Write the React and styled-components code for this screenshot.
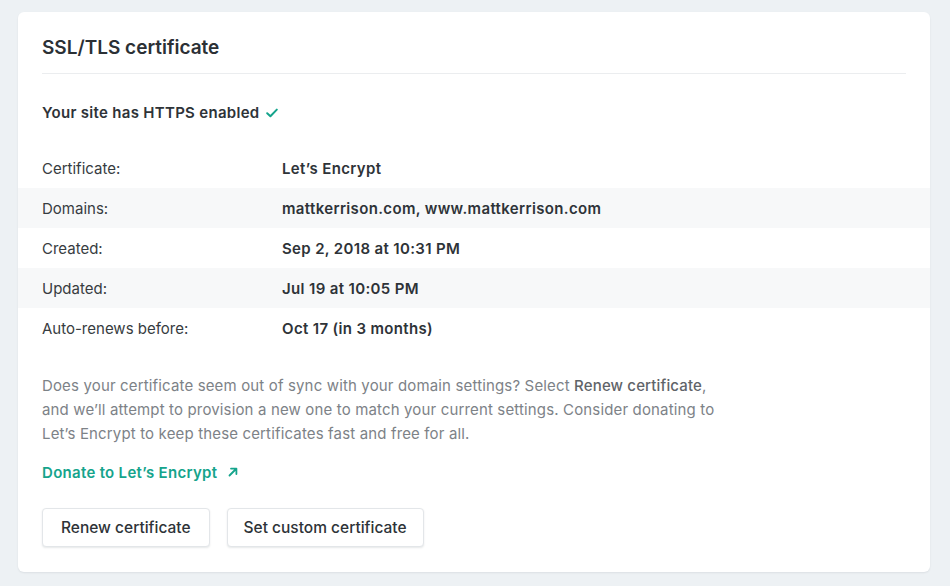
import styled, { createGlobalStyle } from "styled-components";

const GlobalStyle = createGlobalStyle`
  body {
    margin: 0;
    background: #edf1f4;
    font-family: Inter, "Noto Sans", "Liberation Sans", sans-serif;
    -webkit-font-smoothing: antialiased;
  }
`;

const rows = [
  ["Certificate:", "Let’s Encrypt"],
  ["Domains:", "mattkerrison.com, www.mattkerrison.com"],
  ["Created:", "Sep 2, 2018 at 10:31 PM"],
  ["Updated:", "Jul 19 at 10:05 PM"],
  ["Auto-renews before:", "Oct 17 (in 3 months)"],
];

const App = () => {
  return (
    <Page>
      <GlobalStyle />
      <Card>
        <CardHeader>
          <Title>SSL/TLS certificate</Title>
        </CardHeader>
        <Status>
          Your site has HTTPS enabled
          <svg width="12" height="10" viewBox="0 0 12 10">
            <path d="M1.2 5.2 L4.4 8.2 L10.8 1.6" fill="none" stroke="#15a48c" strokeWidth="2" strokeLinecap="round" strokeLinejoin="round" />
          </svg>
        </Status>
        <Table>
          {rows.map(([label, value], i) => (
            <Row key={label} $striped={i % 2 === 1}>
              <Label>{label}</Label>
              <Value>{value}</Value>
            </Row>
          ))}
        </Table>
        <Body>
          <Text>
            Does your certificate seem out of sync with your domain settings? Select <Strong>Renew certificate</Strong>,
            and we’ll attempt to provision a new one to match your current settings. Consider donating to
            Let’s Encrypt to keep these certificates fast and free for all.
          </Text>
          <Link href="#">
            Donate to Let’s Encrypt
            <svg width="10" height="10" viewBox="0 0 10 10">
              <path d="M1.5 8.5 L8 2 M3 1.6 H8.4 V7" fill="none" stroke="#15a48c" strokeWidth="1.8" strokeLinecap="round" strokeLinejoin="round" />
            </svg>
          </Link>
          <Actions>
            <Button $pad={18}>Renew certificate</Button>
            <Button $pad={16}>Set custom certificate</Button>
          </Actions>
        </Body>
      </Card>
    </Page>
  );
};

export default App;

const Page = styled.div`
  padding: 12px 20px 14px 18px;
`;

const Card = styled.div`
  background: #fff;
  border-radius: 6px;
  box-shadow: 0 1px 2px rgba(14, 30, 37, 0.08);
  padding-bottom: 25px;
`;

const CardHeader = styled.div`
  padding: 0 24px;
`;

const Title = styled.h2`
  margin: 0;
  padding: 24px 0 13px;
  line-height: 24px;
  font-size: 19px;
  font-weight: 600;
  color: #2b3035;
  border-bottom: 1px solid #ebedef;
`;

const Status = styled.div`
  display: flex;
  align-items: center;
  gap: 6px;
  padding: 0 24px;
  margin-top: 26px;
  height: 24px;
  font-size: 15px;
  font-weight: 600;
  letter-spacing: 0.3px;
  color: #2e3338;

  svg {
    margin-top: 1px;
  }
`;

const Table = styled.div`
  margin-top: 24px;
`;

const Row = styled.div`
  display: grid;
  grid-template-columns: 240px 1fr;
  align-items: center;
  height: 40px;
  padding: 0 24px;
  background: ${(p) => (p.$striped ? "#f7f8f9" : "transparent")};
  font-size: 15px;
`;

const Label = styled.span`
  color: #373c41;
`;

const Value = styled.span`
  color: #2e3338;
  font-weight: 600;
  letter-spacing: 0.35px;
`;

const Body = styled.div`
  padding: 0 24px;
  margin-top: 26px;
`;

const Text = styled.p`
  margin: 0;
  max-width: 680px;
  font-size: 15px;
  line-height: 24px;
  letter-spacing: 0.15px;
  color: #7d8287;
`;

const Strong = styled.span`
  font-weight: 500;
  color: #5f6469;
`;

const Link = styled.a`
  display: inline-flex;
  align-items: center;
  gap: 11px;
  margin-top: 14px;
  height: 24px;
  font-size: 15px;
  font-weight: 600;
  letter-spacing: 0.3px;
  color: #15a48c;
  text-decoration: none;
`;

const Actions = styled.div`
  display: flex;
  gap: 17px;
  margin-top: 24px;
`;

const Button = styled.button`
  height: 39px;
  padding: 0 ${(p) => p.$pad}px;
  background: #fff;
  border: 1px solid #e3e6e9;
  border-radius: 4px;
  box-shadow: 0 1px 2px rgba(14, 30, 37, 0.1);
  font-family: inherit;
  font-size: 15.5px;
  font-weight: 500;
  color: #2e3338;
`;
